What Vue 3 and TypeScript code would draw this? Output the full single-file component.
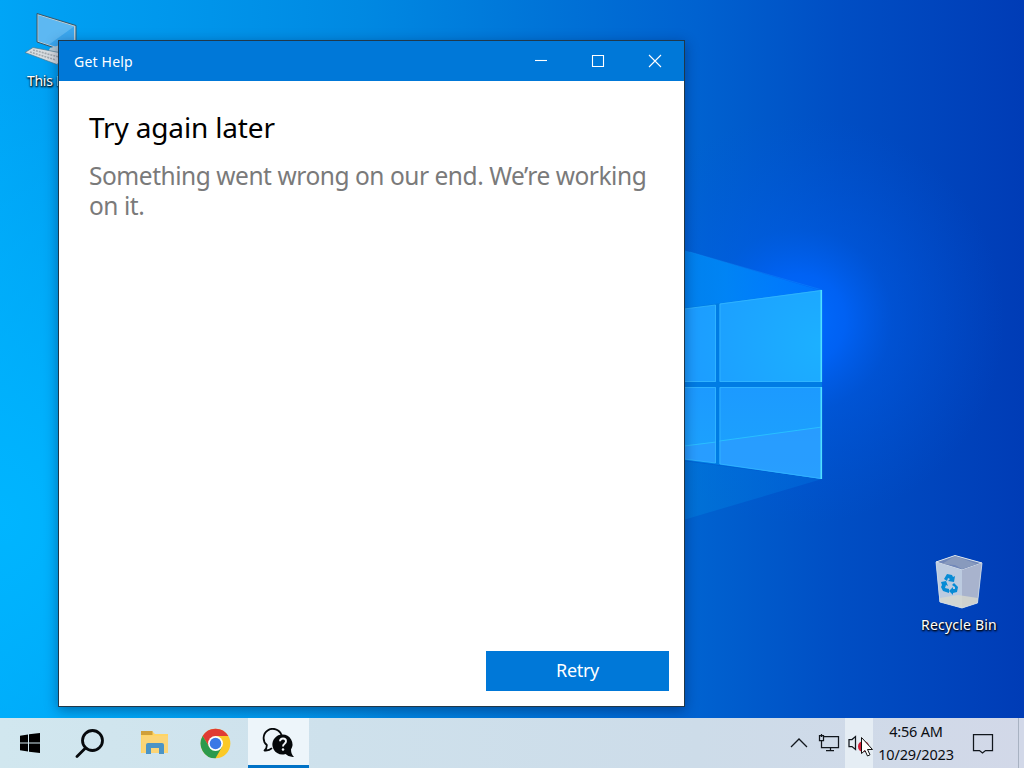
<script setup lang="ts">
import { ref } from 'vue'

const title = ref('Get Help')
const heading = ref('Try again later')
const message = ref('Something went wrong on our end. We’re working on it.')
const time = ref('4:56 AM')
const date = ref('10/29/2023')
</script>

<template>
  <div class="screen">
    <main class="desktop">
      <svg class="wallpaper" viewBox="0 0 1024 718" preserveAspectRatio="none" aria-hidden="true">
        <defs>
          <linearGradient id="sky" x1="0" y1="0" x2="1" y2="0">
            <stop offset="0" stop-color="#00a5f6" />
            <stop offset=".06" stop-color="#009ff2" />
            <stop offset=".35" stop-color="#0089e2" />
            <stop offset=".52" stop-color="#0075d8" />
            <stop offset=".68" stop-color="#0062d0" />
            <stop offset=".82" stop-color="#004ec4" />
            <stop offset="1" stop-color="#003cb6" />
          </linearGradient>
          <radialGradient id="cyan" gradientUnits="userSpaceOnUse" cx="0" cy="520" r="440">
            <stop offset="0" stop-color="#00b5ff" />
            <stop offset="1" stop-color="#00b5ff" stop-opacity="0" />
          </radialGradient>
          <radialGradient id="glow" gradientUnits="userSpaceOnUse" cx="800" cy="320" r="205">
            <stop offset="0" stop-color="#006cff" />
            <stop offset=".22" stop-color="#0066ff" stop-opacity=".8" />
            <stop offset=".45" stop-color="#005ff0" stop-opacity=".38" />
            <stop offset="1" stop-color="#0058e0" stop-opacity="0" />
          </radialGradient>
          <linearGradient id="beam" x1="0" y1="0" x2="1" y2="0">
            <stop offset="0" stop-color="#0088f0" />
            <stop offset=".4" stop-color="#0090fc" />
            <stop offset="1" stop-color="#0078ff" />
          </linearGradient>
          <linearGradient id="lower" x1="0" y1="0" x2="1" y2="0">
            <stop offset="0" stop-color="#0084de" />
            <stop offset="1" stop-color="#006bdc" />
          </linearGradient>
          <radialGradient id="pane" gradientUnits="userSpaceOnUse" cx="820" cy="345" r="130">
            <stop offset="0" stop-color="#1cb0ff" />
            <stop offset="1" stop-color="#1c9dff" />
          </radialGradient>
          <linearGradient id="low" x1="0" y1="0" x2="0" y2="1">
            <stop offset="0" stop-color="#1c9aff" />
            <stop offset="1" stop-color="#1ca4fc" />
          </linearGradient>
        </defs>
        <rect width="1024" height="718" fill="url(#sky)" />
        <rect width="1024" height="718" fill="url(#cyan)" />
        <rect width="1024" height="718" fill="url(#glow)" />
        <path d="M660 243 690 252 822 291 660 312Z" fill="url(#beam)" opacity=".75" />
        <path d="M690 252 822 290" stroke="#15a0ff" stroke-opacity=".3" fill="none" />
        <path d="M660 458 822 479 690 518 660 527Z" fill="url(#lower)" opacity=".5" />
        <path d="M660 311 822 290V479L660 457Z" fill="#007ce4" />
        <path d="M660 312 716 305V382H660ZM719.500 303.500 822 290V382H719.500Z" fill="url(#pane)" />
        <path d="M660 387H716V463L660 456ZM719.500 387H822V479L719.500 464Z" fill="url(#low)" />
        <path d="M660 448 716 441.500V463L660 456ZM719.500 441 822 427V479L719.500 464Z" fill="#2e9bff" fill-opacity=".7" />
        <path d="M660 449 716 442M719.500 441 822 427" fill="none" stroke="#29bfff" stroke-width="1" />
        <path d="M660 312 715.500 305V381.500H660M660 387.500H715.500V463L660 456M720 381.500V304L821 290.500M720 381.500H821M720 387.500H821M720 387.500V464L821 478.500" fill="none" stroke="#36b8ff" stroke-opacity=".75" stroke-width="1" />
        <path d="M821.300 290V382M821.300 387V479" fill="none" stroke="#4fe0ff" stroke-width="1.600" />
      </svg>

      <div class="shortcut pc">
        <svg width="66" height="60" viewBox="0 0 66 60">
          <path d="M17 2.500 56 14.500V44L17 31Z" fill="#b9cdd6" stroke="#35566a" />
          <path d="M18.500 4.500 54 15.500V42L18.500 30Z" fill="#3ba7ee" />
          <path d="M18.500 4.500 54 15.500 29 33.500 18.500 30Z" fill="#70c1f5" opacity=".65" />
          <path d="M30 37 40 34 51 38V43L43 46 28 41Z" fill="#b6cbd5" />
          <path d="M13 36.500 47 43 37 53.500 5 41.500Z" fill="#d9dee1" stroke="#4b7890" stroke-width=".7" />
          <path d="M13 39 39 46M10 41 36 49" stroke="#a3aaaf" stroke-width="1.600" stroke-dasharray="2 1" />
        </svg>
        <span>This PC</span>
      </div>

      <div class="shortcut bin">
        <svg width="60" height="60" viewBox="0 0 60 60">
          <path d="M7 10 26 3.500 53 11 48.500 51 33 56 10.500 50Z" fill="#b9c4da" />
          <path d="M7 10 26 3.500 53 11 33 18Z" fill="#7188b9" stroke="#dce5ed" />
          <path d="M26 4V13L13 12ZM26 4 48 12 33 17 26 13Z" fill="#8e9fbe" opacity=".8" />
          <path d="M7 10 33 18V56L11 50Z" fill="#bccbe0" />
          <path d="M33 18 53 11 48.500 51 33 56Z" fill="#a8b3cd" />
          <path d="M10.500 46 29 43 49 46 48.500 51 33 56 11 50Z" fill="#d7d8ce" opacity=".8" />
          <path d="M7 10 11 50 33 56 48.500 51 53 11" fill="none" stroke="#d1dde8" stroke-width=".8" />
          <g fill="#078bd5">
            <path d="M15 27 18 22 23 23 24 25 26 24 25 30 19 29 21 27 19 26 18 29Z" />
            <path d="M12 30 17 29 19 34 17 33 16 36 20 37 20 41 14 39 12 35 13 33Z" />
            <path d="M25 31 29 35 28 40 24 41 24 43 20 39 24 35 24 37 26 37 26 35 23 33Z" />
          </g>
        </svg>
        <span>Recycle Bin</span>
      </div>

      <section class="window">
        <header class="titlebar">
          <span class="title">{{ title }}</span>
          <button aria-label="Minimize"><svg width="14" height="14"><path d="M1 6.500H13" /></svg></button>
          <button aria-label="Maximize"><svg width="14" height="14"><path d="M1.500 1.500H12.500V12.500H1.500Z" /></svg></button>
          <button aria-label="Close"><svg width="14" height="14"><path d="M1 1 13 13M13 1 1 13" /></svg></button>
        </header>
        <div class="content">
          <h1>{{ heading }}</h1>
          <p>{{ message }}</p>
          <button class="retry">Retry</button>
        </div>
      </section>
    </main>

    <footer class="taskbar">
      <button class="task start" aria-label="Start">
        <svg width="22" height="22" viewBox="0 0 22 22"><path d="M1 3.800 9 2.500V10.500H1ZM10 2.300 21 1V10.500H10ZM1 11.500H9V19.500L1 18.300ZM10 11.500H21V21L10 19.700Z" /></svg>
      </button>
      <button class="task search" aria-label="Search">
        <svg width="30" height="30" viewBox="0 0 30 30" fill="none" stroke="#070a0d" stroke-width="2.800"><circle cx="17.500" cy="12.500" r="10" /><path d="M10.500 20 2 28.500" stroke-linecap="round" /></svg>
      </button>
      <button class="task files" aria-label="File Explorer">
        <svg width="30" height="26" viewBox="0 0 30 26">
          <path d="M1 1H12L15 4H28V23H1Z" fill="#ffd565" />
          <path d="M1 1H12.500V5H1Z" fill="#d0a03a" />
          <path d="M2 6H28V23H2Z" fill="#fbd577" />
          <path d="M6 24V15Q6 13 8 13H22Q24 13 24 15V24H19V18H11V24Z" fill="#4b94c6" />
        </svg>
      </button>
      <button class="task chrome" aria-label="Chrome">
        <svg width="31" height="31" viewBox="0 0 48 48">
          <circle cx="24" cy="24" r="23" fill="#fbc926" />
          <path d="M4.080 12.500A23 23 0 0 1 43.920 12.500H24L14.500 29.500Z" fill="#e03b34" />
          <path d="M4.080 12.500A23 23 0 0 0 24 47L34 29.500 14.500 29.500Z" fill="#2c9a4c" />
          <circle cx="24" cy="24" r="11.500" fill="#fff" />
          <circle cx="24" cy="24" r="9" fill="#3979e6" />
        </svg>
      </button>
      <button class="task help active" aria-label="Get Help">
        <svg width="32" height="32" viewBox="0 0 32 32">
          <path d="M10 20.200Q7 23 2.500 22.500 5 20.500 4.800 17A9.200 9.200 0 1 1 19.500 7" fill="none" stroke="#05080a" stroke-width="1.800" stroke-linejoin="round" />
          <path d="M20.500 6.500A9.900 9.900 0 0 1 29 21.500Q29 26 32 29 27 29.500 23.500 26A10 10 0 1 1 20.500 6.500Z" fill="#05080a" />
          <path d="M18 13.300Q18.200 10.500 21 10.500 24 10.500 24 13.200 24 14.500 22.500 15.700 21 16.700 21 18.600" fill="none" stroke="#f3f7fa" stroke-width="1.900" />
          <circle cx="21" cy="21.500" r="1.250" fill="#f3f7fa" />
        </svg>
      </button>

      <div class="tray">
        <button class="chevron" aria-label="Show hidden icons"><svg width="18" height="12"><path d="M1 10 9 2 17 10" /></svg></button>
        <button class="network" aria-label="Network">
          <svg width="22" height="20"><path d="M5.500 3.500H20.500V14.500H3.500V8M12.500 14.500V17.500M8 17.500H16M1.500 2.500H5.500V7.500H1.500ZM3.500 1V4" /></svg>
        </button>
        <button class="volume" aria-label="Volume">
          <svg width="26" height="24" viewBox="0 0 26 24">
            <path d="M2 8.500H5L8.500 5.500V18.500L5 15.500H2Z" />
            <circle cx="16.500" cy="15.500" r="5.500" class="muted" />
            <path class="pointer" d="M14.500 6.500V22.500L18 19.500 20.500 25 23 23.800 20.500 18.500H25.500Z" />
          </svg>
        </button>
        <div class="clock"><span>{{ time }}</span><span class="date">{{ date }}</span></div>
        <button class="notice" aria-label="Notifications">
          <svg width="22" height="22"><path d="M1.500 2.500H20.500V18.500H13.500L10.500 21 7.500 18.500H1.500Z" /></svg>
        </button>
        <button class="peek" aria-label="Show desktop"></button>
      </div>
    </footer>
  </div>
</template>

<style>
body { margin: 0; overflow: hidden; }
</style>

<style scoped>
* { box-sizing: border-box; }
button { margin: 0; padding: 0; border: 0; background: transparent; font: inherit; color: inherit; }
svg { display: block; flex: none; }
.screen { width: 1024px; height: 768px; display: flex; flex-direction: column; overflow: hidden; font-family: "Noto Sans", "Open Sans", sans-serif; }
.desktop { position: relative; height: 718px; overflow: hidden; }
.wallpaper { position: absolute; width: 100%; height: 100%; }
.shortcut { position: absolute; display: flex; flex-direction: column; align-items: center; color: #fff; font-size: 14px; line-height: 20px; white-space: nowrap; text-shadow: 1px 1px 2px #000, 0 1px 2px #000; }
.pc { left: 20px; top: 11px; width: 66px; letter-spacing: -.3px; align-items: flex-start; }
.pc span { padding-left: 7px; }
.bin { left: 909px; top: 552px; width: 100px; letter-spacing: .2px; gap: 3px; }
.window { position: absolute; left: 58px; top: 40px; width: 627px; height: 667px; display: flex; flex-direction: column; border: 1px solid #20384a; background: #fff; box-shadow: 0 3px 12px rgba(0, 20, 65, .42); }
.titlebar { height: 40px; display: flex; flex: none; padding-right: 1px; background: #0078d8; color: #fff; }
.title { flex: 1; padding-left: 15px; font-size: 14px; letter-spacing: .2px; line-height: 41px; }
.titlebar button { width: 57px; display: flex; align-items: center; justify-content: center; }
.titlebar svg { fill: none; stroke: #fff; stroke-width: 1.1; }
.content { flex: 1; display: flex; flex-direction: column; padding: 26px 15px 15px 30px; }
h1 { margin: 0; font-size: 28px; line-height: 40px; font-weight: 400; letter-spacing: -.15px; color: #000; }
p { margin: 14px 0 0; font-size: 24.5px; line-height: 30px; letter-spacing: -.46px; color: #7a7a7a; }
.retry { width: 183px; height: 40px; margin: auto 0 0; align-self: flex-end; background: #0078d8; color: #fff; font-size: 18px; letter-spacing: -.3px; padding-bottom: 2px; }
.taskbar { height: 50px; flex: none; display: flex; background: linear-gradient(90deg, #d1e7ef, #cee1ec 32%, #cddce9 68%, #d2d8e8); color: #0a0d12; }
.task { width: 62px; height: 50px; display: flex; align-items: center; justify-content: center; }
.start { width: 60px; }
.search { width: 60px; }
.files { width: 66px; padding-left: 3px; }
.chrome { width: 62px; padding-right: 3px; }
.active { background: #edf5fa; border-bottom: 3px solid #0072c6; width: 61px; padding: 4px 2px 0 0; }
.tray { display: flex; align-items: stretch; margin-left: auto; }
.tray button { display: flex; align-items: center; justify-content: center; }
.tray svg { fill: none; stroke: #11161c; stroke-width: 1.25; }
.chevron { width: 30px; }
.tray .network { width: 31px; padding-right: 2px; }
.tray .volume { width: 28px; background: #e5edf4; padding-left: 2px; }
.volume svg { overflow: visible; }
.volume .muted { fill: #d51c36; stroke: none; }
.volume .pointer { fill: #fff; stroke: #111; stroke-width: 1; }
.clock { width: 86px; padding-top: 2px; display: flex; flex-direction: column; align-items: center; font-size: 14.5px; line-height: 23px; letter-spacing: -.2px; white-space: nowrap; }
.date { letter-spacing: -.15px; }
.notice { width: 48px; margin-right: 11px; }
.tray .peek { width: 6px; border-left: 1px solid #a8b2c2; }
</style>
